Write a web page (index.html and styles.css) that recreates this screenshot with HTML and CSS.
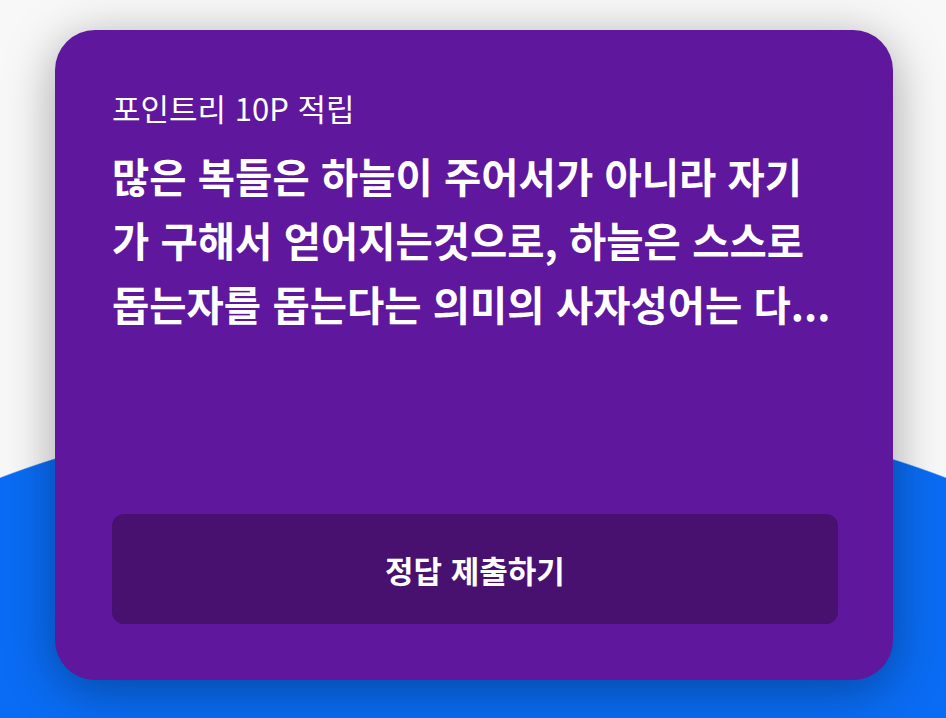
FILE: index.html
```html
<!DOCTYPE html>
<html lang="ko">
<head>
    <meta charset="UTF-8">
    <meta name="viewport" content="width=device-width, initial-scale=1.0">
    <title>퀴즈</title>
    <link rel="stylesheet" href="styles.css">
</head>
<body>
    <div class="quiz-card">
        <p class="quiz-reward">포인트리 10P 적립</p>
        <h1 class="quiz-question">많은 복들은 하늘이 주어서가 아니라 자기가 구해서 얻어지는것으로, 하늘은 스스로 돕는자를 돕는다는 의미의 사자성어는 다...</h1>
        <button class="btn-submit">정답 제출하기</button>
    </div>
</body>
</html>
```

FILE: styles.css
```css
* {
    margin: 0;
    padding: 0;
    box-sizing: border-box;
}

body {
    font-family: "Noto Sans CJK KR", "Noto Sans", sans-serif;
    background:
        radial-gradient(ellipse 700px 293px at 50% 693px, #0a6cf4 99.6%, transparent 100%),
        #f8f8f8;
    height: 100vh;
    padding: 30px 53px 0 55px;
    color: white;
}

.quiz-card {
    height: 650px;
    background: #5e179d;
    border-radius: 40px;
    padding: 0 55px 56px 57px;
    display: flex;
    flex-direction: column;
    box-shadow: 0 10px 50px rgba(0, 0, 0, 0.35);
}

.quiz-reward {
    margin-top: 62px;
    font-size: 31px;
    line-height: 31px;
}

.quiz-question {
    margin-top: 21px;
    font-size: 40.5px;
    font-weight: 700;
    line-height: 64px;
    word-break: break-all;
    display: -webkit-box;
    -webkit-line-clamp: 3;
    -webkit-box-orient: vertical;
    overflow: hidden;
}

.btn-submit {
    margin-top: auto;
    height: 110px;
    border: none;
    border-radius: 12px;
    background: #48106f;
    color: white;
    font-family: inherit;
    font-size: 31px;
    font-weight: 700;
    cursor: pointer;
}
```
